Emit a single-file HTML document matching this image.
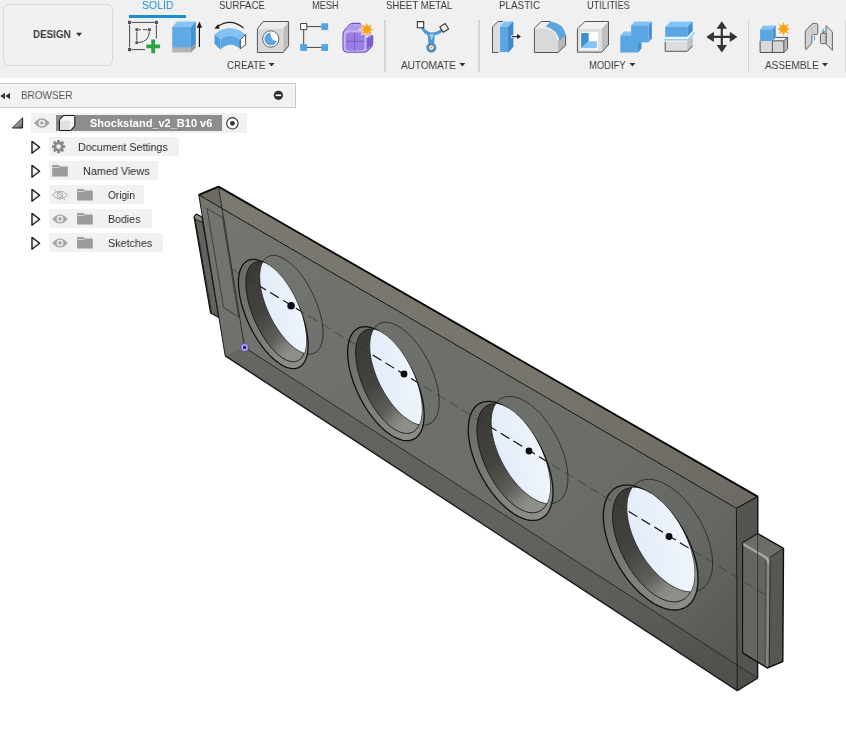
<!DOCTYPE html>
<html><head><meta charset="utf-8"><title>Shockstand_v2_B10 v6</title>
<style>
html,body{margin:0;padding:0;background:#fff;}
body{width:846px;height:738px;position:relative;overflow:hidden;font-family:"Liberation Sans",sans-serif;}
.t{position:absolute;white-space:nowrap;transform-origin:0 0;line-height:normal;will-change:transform;}
.abs{position:absolute;}
#toolbar{left:0;top:0;width:846px;height:78.3px;background:#f0f0f0;}
#design{left:3px;top:4px;width:108px;height:60px;border:1px solid #d9d9d9;border-radius:6px;background:#f1f1f1;box-sizing:content-box;}
#bhead{left:-1px;top:82.7px;width:294.6px;height:23.6px;background:#f2f2f2;border:1px solid #c9c9c9;}
.row{position:absolute;height:19.8px;background:#f1f1f1;}
#sel{left:56px;top:115.2px;width:166.3px;height:15.6px;background:#8d8d8d;}
.sep{position:absolute;width:1.6px;top:20px;height:52px;background:#d6d6d6;}
svg{position:absolute;left:0;top:0;}
</style></head><body>
<div class="abs" id="toolbar"></div>
<div class="abs" id="design"></div>
<div class="sep" style="left:384px"></div><div class="sep" style="left:478.2px"></div><div class="sep" style="left:747.6px"></div><div class="sep" style="left:844.6px"></div>
<div class="abs" style="left:129.4px;top:15px;width:56.4px;height:2.8px;background:#1a8fd3"></div>
<div class="abs" id="bhead"></div>
<div class="row" style="left:31px;top:112.8px;width:215.5px"></div>
<div class="row" style="left:49.4px;top:136.6px;width:129.6px"></div>
<div class="row" style="left:49.4px;top:160.6px;width:109.1px"></div>
<div class="row" style="left:49.4px;top:184.7px;width:94.2px"></div>
<div class="row" style="left:49.4px;top:208.6px;width:102.4px"></div>
<div class="row" style="left:49.4px;top:232.6px;width:113.6px"></div>
<div class="abs" id="sel"></div>
<svg width="846" height="738" viewBox="0 0 846 738">
<defs>
<linearGradient id="gFront" gradientUnits="userSpaceOnUse" x1="230" y1="220" x2="700" y2="680"><stop offset="0" stop-color="#73756f"/><stop offset="0.3" stop-color="#6e706c"/><stop offset="0.65" stop-color="#6b6d69"/><stop offset="0.85" stop-color="#656763"/><stop offset="1" stop-color="#575955"/></linearGradient>
<linearGradient id="gTop" gradientUnits="userSpaceOnUse" x1="210" y1="190" x2="750" y2="500"><stop offset="0" stop-color="#7c7970"/><stop offset="0.6" stop-color="#77746b"/><stop offset="1" stop-color="#6c6a62"/></linearGradient>
<linearGradient id="gWin" x1="0" y1="0.6" x2="1" y2="0.3"><stop offset="0" stop-color="#e1ebf8"/><stop offset="0.5" stop-color="#ecf2fb"/><stop offset="1" stop-color="#f7faff"/></linearGradient>
<linearGradient id="gBore" x1="0" y1="0" x2="0.6" y2="1"><stop offset="0" stop-color="#383835"/><stop offset="0.5" stop-color="#43433f"/><stop offset="0.78" stop-color="#5f5f5a"/><stop offset="0.92" stop-color="#84847f"/><stop offset="1" stop-color="#8f8f8a"/></linearGradient>
<linearGradient id="gCham" x1="0" y1="0" x2="0.7" y2="1"><stop offset="0" stop-color="#686964"/><stop offset="0.5" stop-color="#787974"/><stop offset="1" stop-color="#8b8c86"/></linearGradient>
</defs>
<polygon points="194.1,217 196.3,214.2 201.8,217 202.8,222.5 218.9,317.3 210.6,313" fill="#62635e" stroke="#141414" stroke-width="1.3" stroke-linejoin="round"/>
<polygon points="194.1,217 196.3,214.2 201.8,217 202.8,222.5 195.3,219.2" fill="#8a8983" stroke="#141414" stroke-width="0.9" stroke-linejoin="round"/>
<polyline points="195.3,219.2 211.6,313.4" fill="none" stroke="#1c1c1c" stroke-width="0.8"/>
<polygon points="198.8,194.9 218.5,186.6 757.8,496.6 736.4,508.3" fill="url(#gTop)"/>
<polygon points="736.4,508.3 757.8,496.6 757.6,678.1 737.3,690.6" fill="#55544f"/>
<polygon points="198.8,194.9 736.4,508.3 737.3,690.6 225.2,355.8" fill="url(#gFront)"/>
<polygon points="198.8,194.9 218.5,186.6 222.0,208.5" fill="#67665e" opacity="0.75"/>
<polygon points="198.8,194.9 222.0,208.5 244.6,347.5 225.2,355.8" fill="#6b6a62" opacity="0.10"/>
<polygon points="225.2,355.8 244.6,347.5 757.6,678.1 737.3,690.6" fill="#3c3c38" opacity="0.22"/>
<polyline points="218.5,186.6 244.6,347.5 757.6,678.1" fill="none" stroke="#222" stroke-width="1" opacity="0.85"/>
<polygon points="207,208.5 222.6,217.6 238.6,317 223.6,307.3" fill="none" stroke="#2a2a28" stroke-width="0.8" opacity="0.85"/>
<clipPath id="cl0"><path d="M305.59 331.64 L305.92 334.63 L306.13 337.53 L306.19 340.31 L306.13 342.96 L305.94 345.47 L305.61 347.83 L305.16 350.03 L304.58 352.06 L303.88 353.91 L303.06 355.58 L302.12 357.06 L301.07 358.34 L299.92 359.42 L298.67 360.30 L297.32 360.97 L295.88 361.42 L294.37 361.67 L292.77 361.71 L291.11 361.53 L289.38 361.15 L287.61 360.55 L285.78 359.76 L283.92 358.76 L282.02 357.57 L280.11 356.19 L278.18 354.63 L276.24 352.89 L274.30 350.98 L272.37 348.91 L270.45 346.69 L268.56 344.32 L266.70 341.83 L264.88 339.20 L263.11 336.47 L261.39 333.64 L259.73 330.71 L258.14 327.71 L256.62 324.64 L255.18 321.52 L253.83 318.35 L252.56 315.16 L251.40 311.96 L250.33 308.75 L249.37 305.55 L248.52 302.37 L247.78 299.23 L247.16 296.14 L246.66 293.12 L246.28 290.16 L246.03 287.30 L245.89 284.53 L245.89 281.87 L246.01 279.34 L246.26 276.94 L246.63 274.68 L247.13 272.57 L247.75 270.63 L248.49 268.86 L249.35 267.27 L250.33 265.87 L251.41 264.67 L252.61 263.66 L253.90 262.86 L255.30 262.27 L256.78 261.89 L258.35 261.72 L260.00 261.78 L261.72 262.05 L263.51 262.54 L265.35 263.25 L267.24 264.16 L269.17 265.29 L271.14 266.63 L273.13 268.16 L275.13 269.89 L277.14 271.81 L279.14 273.90 L281.13 276.16 L283.10 278.59 L285.04 281.16 L286.94 283.87 L288.79 286.70 L290.59 289.65 L292.32 292.69 L293.98 295.82 L295.56 299.02 L297.05 302.27 L298.44 305.57 L299.74 308.90 L300.93 312.23 L302.01 315.56 L302.97 318.87 L303.82 322.15 L304.54 325.38 L305.13 328.55 L305.59 331.64 Z"/></clipPath>
<path d="M322.43 324.36 L322.77 327.33 L322.98 330.19 L323.04 332.94 L322.97 335.56 L322.76 338.04 L322.41 340.38 L321.92 342.56 L321.31 344.57 L320.57 346.41 L319.70 348.07 L318.71 349.53 L317.60 350.81 L316.39 351.88 L315.07 352.76 L313.65 353.42 L312.13 353.88 L310.53 354.14 L308.85 354.18 L307.10 354.01 L305.29 353.64 L303.42 353.07 L301.50 352.29 L299.54 351.31 L297.55 350.15 L295.54 348.79 L293.51 347.25 L291.47 345.54 L289.43 343.66 L287.40 341.63 L285.39 339.44 L283.41 337.11 L281.46 334.64 L279.55 332.06 L277.69 329.36 L275.89 326.56 L274.15 323.68 L272.48 320.71 L270.89 317.68 L269.38 314.60 L267.96 311.48 L266.64 308.32 L265.42 305.16 L264.30 301.98 L263.30 298.82 L262.41 295.68 L261.65 292.58 L261.00 289.52 L260.48 286.53 L260.09 283.61 L259.83 280.77 L259.70 278.03 L259.70 275.40 L259.83 272.89 L260.10 270.51 L260.50 268.28 L261.03 266.19 L261.69 264.27 L262.48 262.51 L263.39 260.94 L264.42 259.54 L265.57 258.34 L266.83 257.34 L268.20 256.54 L269.67 255.95 L271.23 255.57 L272.89 255.40 L274.62 255.45 L276.43 255.71 L278.31 256.19 L280.25 256.88 L282.24 257.78 L284.27 258.89 L286.34 260.20 L288.43 261.71 L290.53 263.41 L292.64 265.30 L294.75 267.36 L296.84 269.59 L298.91 271.98 L300.94 274.52 L302.93 277.19 L304.88 279.98 L306.76 282.89 L308.57 285.89 L310.31 288.98 L311.96 292.14 L313.52 295.36 L314.98 298.61 L316.34 301.89 L317.58 305.19 L318.71 308.48 L319.71 311.75 L320.59 314.99 L321.34 318.18 L321.95 321.31 L322.43 324.36 Z" fill="none" stroke="#222" stroke-width="1" opacity="0.8"/>
<path d="M307.40 335.86 L307.78 339.14 L308.01 342.30 L308.09 345.34 L308.02 348.23 L307.79 350.97 L307.41 353.55 L306.89 355.95 L306.22 358.16 L305.40 360.18 L304.45 362.00 L303.37 363.61 L302.16 365.00 L300.83 366.17 L299.38 367.12 L297.82 367.84 L296.16 368.33 L294.41 368.59 L292.56 368.62 L290.64 368.42 L288.65 367.99 L286.60 367.34 L284.50 366.46 L282.35 365.37 L280.16 364.07 L277.95 362.55 L275.72 360.84 L273.49 358.94 L271.25 356.85 L269.02 354.59 L266.82 352.16 L264.64 349.58 L262.49 346.85 L260.40 343.99 L258.35 341.01 L256.37 337.91 L254.46 334.72 L252.62 331.45 L250.87 328.10 L249.21 324.70 L247.64 321.25 L246.19 317.76 L244.84 314.27 L243.61 310.77 L242.50 307.28 L241.51 303.81 L240.66 300.39 L239.94 297.02 L239.36 293.71 L238.91 290.49 L238.61 287.36 L238.46 284.34 L238.45 281.44 L238.58 278.67 L238.86 276.04 L239.29 273.58 L239.85 271.28 L240.57 269.15 L241.42 267.22 L242.40 265.48 L243.52 263.94 L244.77 262.62 L246.15 261.51 L247.64 260.63 L249.24 259.98 L250.96 259.56 L252.77 259.38 L254.67 259.44 L256.66 259.73 L258.72 260.26 L260.84 261.03 L263.03 262.03 L265.26 263.26 L267.53 264.72 L269.83 266.40 L272.14 268.29 L274.47 270.38 L276.79 272.67 L279.09 275.15 L281.37 277.80 L283.61 280.61 L285.81 283.58 L287.96 286.68 L290.04 289.90 L292.04 293.24 L293.96 296.66 L295.79 300.17 L297.51 303.73 L299.13 307.34 L300.63 310.98 L302.01 314.63 L303.26 318.28 L304.37 321.90 L305.35 325.49 L306.18 329.02 L306.86 332.48 L307.40 335.86 Z" fill="url(#gCham)" stroke="#101010" stroke-width="1.3"/>
<path d="M305.59 331.64 L305.92 334.63 L306.13 337.53 L306.19 340.31 L306.13 342.96 L305.94 345.47 L305.61 347.83 L305.16 350.03 L304.58 352.06 L303.88 353.91 L303.06 355.58 L302.12 357.06 L301.07 358.34 L299.92 359.42 L298.67 360.30 L297.32 360.97 L295.88 361.42 L294.37 361.67 L292.77 361.71 L291.11 361.53 L289.38 361.15 L287.61 360.55 L285.78 359.76 L283.92 358.76 L282.02 357.57 L280.11 356.19 L278.18 354.63 L276.24 352.89 L274.30 350.98 L272.37 348.91 L270.45 346.69 L268.56 344.32 L266.70 341.83 L264.88 339.20 L263.11 336.47 L261.39 333.64 L259.73 330.71 L258.14 327.71 L256.62 324.64 L255.18 321.52 L253.83 318.35 L252.56 315.16 L251.40 311.96 L250.33 308.75 L249.37 305.55 L248.52 302.37 L247.78 299.23 L247.16 296.14 L246.66 293.12 L246.28 290.16 L246.03 287.30 L245.89 284.53 L245.89 281.87 L246.01 279.34 L246.26 276.94 L246.63 274.68 L247.13 272.57 L247.75 270.63 L248.49 268.86 L249.35 267.27 L250.33 265.87 L251.41 264.67 L252.61 263.66 L253.90 262.86 L255.30 262.27 L256.78 261.89 L258.35 261.72 L260.00 261.78 L261.72 262.05 L263.51 262.54 L265.35 263.25 L267.24 264.16 L269.17 265.29 L271.14 266.63 L273.13 268.16 L275.13 269.89 L277.14 271.81 L279.14 273.90 L281.13 276.16 L283.10 278.59 L285.04 281.16 L286.94 283.87 L288.79 286.70 L290.59 289.65 L292.32 292.69 L293.98 295.82 L295.56 299.02 L297.05 302.27 L298.44 305.57 L299.74 308.90 L300.93 312.23 L302.01 315.56 L302.97 318.87 L303.82 322.15 L304.54 325.38 L305.13 328.55 L305.59 331.64 Z" fill="url(#gBore)" stroke="#151515" stroke-width="0.9"/>
<path d="M322.43 324.36 L322.77 327.33 L322.98 330.19 L323.04 332.94 L322.97 335.56 L322.76 338.04 L322.41 340.38 L321.92 342.56 L321.31 344.57 L320.57 346.41 L319.70 348.07 L318.71 349.53 L317.60 350.81 L316.39 351.88 L315.07 352.76 L313.65 353.42 L312.13 353.88 L310.53 354.14 L308.85 354.18 L307.10 354.01 L305.29 353.64 L303.42 353.07 L301.50 352.29 L299.54 351.31 L297.55 350.15 L295.54 348.79 L293.51 347.25 L291.47 345.54 L289.43 343.66 L287.40 341.63 L285.39 339.44 L283.41 337.11 L281.46 334.64 L279.55 332.06 L277.69 329.36 L275.89 326.56 L274.15 323.68 L272.48 320.71 L270.89 317.68 L269.38 314.60 L267.96 311.48 L266.64 308.32 L265.42 305.16 L264.30 301.98 L263.30 298.82 L262.41 295.68 L261.65 292.58 L261.00 289.52 L260.48 286.53 L260.09 283.61 L259.83 280.77 L259.70 278.03 L259.70 275.40 L259.83 272.89 L260.10 270.51 L260.50 268.28 L261.03 266.19 L261.69 264.27 L262.48 262.51 L263.39 260.94 L264.42 259.54 L265.57 258.34 L266.83 257.34 L268.20 256.54 L269.67 255.95 L271.23 255.57 L272.89 255.40 L274.62 255.45 L276.43 255.71 L278.31 256.19 L280.25 256.88 L282.24 257.78 L284.27 258.89 L286.34 260.20 L288.43 261.71 L290.53 263.41 L292.64 265.30 L294.75 267.36 L296.84 269.59 L298.91 271.98 L300.94 274.52 L302.93 277.19 L304.88 279.98 L306.76 282.89 L308.57 285.89 L310.31 288.98 L311.96 292.14 L313.52 295.36 L314.98 298.61 L316.34 301.89 L317.58 305.19 L318.71 308.48 L319.71 311.75 L320.59 314.99 L321.34 318.18 L321.95 321.31 L322.43 324.36 Z" fill="url(#gWin)" stroke="#222" stroke-width="0.8" clip-path="url(#cl0)"/>
<clipPath id="cl1"><path d="M421.52 403.36 L421.75 406.45 L421.85 409.42 L421.79 412.26 L421.59 414.97 L421.25 417.53 L420.77 419.92 L420.15 422.14 L419.39 424.19 L418.50 426.04 L417.48 427.70 L416.35 429.16 L415.09 430.40 L413.72 431.44 L412.25 432.26 L410.68 432.86 L409.02 433.25 L407.28 433.41 L405.46 433.35 L403.57 433.07 L401.62 432.58 L399.62 431.87 L397.58 430.95 L395.51 429.83 L393.40 428.50 L391.28 426.98 L389.15 425.27 L387.03 423.38 L384.91 421.32 L382.80 419.09 L380.73 416.71 L378.68 414.19 L376.68 411.53 L374.73 408.75 L372.84 405.85 L371.02 402.86 L369.26 399.78 L367.59 396.62 L366.00 393.40 L364.51 390.12 L363.11 386.82 L361.82 383.48 L360.64 380.14 L359.58 376.80 L358.63 373.48 L357.81 370.18 L357.12 366.93 L356.55 363.74 L356.12 360.61 L355.83 357.57 L355.67 354.63 L355.64 351.79 L355.76 349.07 L356.01 346.48 L356.41 344.04 L356.94 341.75 L357.60 339.63 L358.40 337.67 L359.32 335.90 L360.38 334.32 L361.55 332.94 L362.84 331.76 L364.25 330.80 L365.77 330.05 L367.38 329.52 L369.09 329.21 L370.89 329.13 L372.76 329.28 L374.71 329.65 L376.73 330.25 L378.80 331.07 L380.91 332.12 L383.06 333.38 L385.24 334.85 L387.44 336.54 L389.64 338.42 L391.84 340.49 L394.03 342.75 L396.20 345.18 L398.34 347.77 L400.43 350.51 L402.47 353.39 L404.45 356.40 L406.37 359.52 L408.20 362.73 L409.95 366.03 L411.60 369.40 L413.15 372.81 L414.59 376.27 L415.91 379.75 L417.11 383.23 L418.19 386.70 L419.13 390.15 L419.94 393.55 L420.61 396.90 L421.13 400.17 L421.52 403.36 Z"/></clipPath>
<path d="M438.88 395.48 L439.12 398.53 L439.20 401.46 L439.14 404.28 L438.92 406.95 L438.55 409.48 L438.04 411.85 L437.38 414.05 L436.57 416.07 L435.63 417.91 L434.56 419.56 L433.36 421.00 L432.03 422.24 L430.59 423.27 L429.04 424.09 L427.39 424.70 L425.64 425.09 L423.81 425.26 L421.89 425.21 L419.91 424.94 L417.86 424.47 L415.76 423.78 L413.62 422.88 L411.43 421.78 L409.23 420.48 L407.00 418.99 L404.77 417.31 L402.53 415.45 L400.31 413.42 L398.11 411.23 L395.93 408.89 L393.79 406.41 L391.69 403.79 L389.65 401.05 L387.67 398.20 L385.75 395.25 L383.92 392.21 L382.17 389.09 L380.51 385.91 L378.95 382.69 L377.49 379.42 L376.14 376.13 L374.91 372.83 L373.80 369.53 L372.82 366.25 L371.96 363.00 L371.24 359.79 L370.66 356.63 L370.21 353.54 L369.91 350.54 L369.75 347.62 L369.74 344.82 L369.87 342.13 L370.14 339.57 L370.57 337.15 L371.13 334.88 L371.84 332.78 L372.68 330.84 L373.66 329.09 L374.78 327.52 L376.02 326.15 L377.38 324.98 L378.87 324.02 L380.46 323.27 L382.16 322.74 L383.97 322.43 L385.86 322.34 L387.83 322.47 L389.88 322.83 L392.00 323.42 L394.18 324.22 L396.40 325.25 L398.66 326.48 L400.94 327.93 L403.25 329.59 L405.56 331.44 L407.87 333.48 L410.17 335.70 L412.44 338.09 L414.68 340.64 L416.87 343.34 L419.01 346.18 L421.09 349.14 L423.09 352.22 L425.01 355.39 L426.83 358.64 L428.56 361.96 L430.18 365.33 L431.68 368.74 L433.06 372.17 L434.31 375.60 L435.43 379.03 L436.41 382.43 L437.25 385.79 L437.94 389.09 L438.48 392.33 L438.88 395.48 Z" fill="none" stroke="#222" stroke-width="1" opacity="0.8"/>
<path d="M423.75 407.94 L424.02 411.31 L424.13 414.56 L424.07 417.67 L423.84 420.63 L423.44 423.42 L422.88 426.03 L422.16 428.45 L421.28 430.68 L420.25 432.70 L419.07 434.50 L417.76 436.09 L416.30 437.44 L414.72 438.57 L413.02 439.45 L411.21 440.10 L409.29 440.51 L407.27 440.68 L405.17 440.61 L402.99 440.29 L400.74 439.74 L398.43 438.96 L396.08 437.95 L393.68 436.71 L391.25 435.26 L388.81 433.59 L386.35 431.72 L383.90 429.65 L381.45 427.40 L379.03 424.96 L376.63 422.36 L374.28 419.61 L371.97 416.70 L369.72 413.67 L367.54 410.51 L365.44 407.24 L363.41 403.88 L361.48 400.43 L359.65 396.92 L357.93 393.35 L356.32 389.74 L354.83 386.10 L353.46 382.46 L352.23 378.81 L351.14 375.19 L350.19 371.59 L349.38 368.05 L348.73 364.56 L348.22 361.15 L347.87 357.83 L347.68 354.61 L347.65 351.51 L347.78 348.55 L348.07 345.72 L348.51 343.05 L349.12 340.55 L349.88 338.22 L350.79 336.08 L351.85 334.15 L353.06 332.42 L354.41 330.90 L355.90 329.61 L357.52 328.55 L359.26 327.73 L361.13 327.14 L363.10 326.80 L365.17 326.71 L367.34 326.86 L369.59 327.27 L371.91 327.92 L374.30 328.81 L376.75 329.95 L379.23 331.33 L381.75 332.94 L384.29 334.78 L386.84 336.84 L389.39 339.11 L391.92 341.58 L394.43 344.24 L396.91 347.07 L399.33 350.08 L401.70 353.23 L403.99 356.52 L406.21 359.94 L408.33 363.46 L410.35 367.07 L412.27 370.76 L414.06 374.50 L415.73 378.29 L417.26 382.10 L418.65 385.91 L419.90 389.71 L420.99 393.48 L421.93 397.21 L422.70 400.87 L423.31 404.45 L423.75 407.94 Z" fill="url(#gCham)" stroke="#101010" stroke-width="1.3"/>
<path d="M421.52 403.36 L421.75 406.45 L421.85 409.42 L421.79 412.26 L421.59 414.97 L421.25 417.53 L420.77 419.92 L420.15 422.14 L419.39 424.19 L418.50 426.04 L417.48 427.70 L416.35 429.16 L415.09 430.40 L413.72 431.44 L412.25 432.26 L410.68 432.86 L409.02 433.25 L407.28 433.41 L405.46 433.35 L403.57 433.07 L401.62 432.58 L399.62 431.87 L397.58 430.95 L395.51 429.83 L393.40 428.50 L391.28 426.98 L389.15 425.27 L387.03 423.38 L384.91 421.32 L382.80 419.09 L380.73 416.71 L378.68 414.19 L376.68 411.53 L374.73 408.75 L372.84 405.85 L371.02 402.86 L369.26 399.78 L367.59 396.62 L366.00 393.40 L364.51 390.12 L363.11 386.82 L361.82 383.48 L360.64 380.14 L359.58 376.80 L358.63 373.48 L357.81 370.18 L357.12 366.93 L356.55 363.74 L356.12 360.61 L355.83 357.57 L355.67 354.63 L355.64 351.79 L355.76 349.07 L356.01 346.48 L356.41 344.04 L356.94 341.75 L357.60 339.63 L358.40 337.67 L359.32 335.90 L360.38 334.32 L361.55 332.94 L362.84 331.76 L364.25 330.80 L365.77 330.05 L367.38 329.52 L369.09 329.21 L370.89 329.13 L372.76 329.28 L374.71 329.65 L376.73 330.25 L378.80 331.07 L380.91 332.12 L383.06 333.38 L385.24 334.85 L387.44 336.54 L389.64 338.42 L391.84 340.49 L394.03 342.75 L396.20 345.18 L398.34 347.77 L400.43 350.51 L402.47 353.39 L404.45 356.40 L406.37 359.52 L408.20 362.73 L409.95 366.03 L411.60 369.40 L413.15 372.81 L414.59 376.27 L415.91 379.75 L417.11 383.23 L418.19 386.70 L419.13 390.15 L419.94 393.55 L420.61 396.90 L421.13 400.17 L421.52 403.36 Z" fill="url(#gBore)" stroke="#151515" stroke-width="0.9"/>
<path d="M438.88 395.48 L439.12 398.53 L439.20 401.46 L439.14 404.28 L438.92 406.95 L438.55 409.48 L438.04 411.85 L437.38 414.05 L436.57 416.07 L435.63 417.91 L434.56 419.56 L433.36 421.00 L432.03 422.24 L430.59 423.27 L429.04 424.09 L427.39 424.70 L425.64 425.09 L423.81 425.26 L421.89 425.21 L419.91 424.94 L417.86 424.47 L415.76 423.78 L413.62 422.88 L411.43 421.78 L409.23 420.48 L407.00 418.99 L404.77 417.31 L402.53 415.45 L400.31 413.42 L398.11 411.23 L395.93 408.89 L393.79 406.41 L391.69 403.79 L389.65 401.05 L387.67 398.20 L385.75 395.25 L383.92 392.21 L382.17 389.09 L380.51 385.91 L378.95 382.69 L377.49 379.42 L376.14 376.13 L374.91 372.83 L373.80 369.53 L372.82 366.25 L371.96 363.00 L371.24 359.79 L370.66 356.63 L370.21 353.54 L369.91 350.54 L369.75 347.62 L369.74 344.82 L369.87 342.13 L370.14 339.57 L370.57 337.15 L371.13 334.88 L371.84 332.78 L372.68 330.84 L373.66 329.09 L374.78 327.52 L376.02 326.15 L377.38 324.98 L378.87 324.02 L380.46 323.27 L382.16 322.74 L383.97 322.43 L385.86 322.34 L387.83 322.47 L389.88 322.83 L392.00 323.42 L394.18 324.22 L396.40 325.25 L398.66 326.48 L400.94 327.93 L403.25 329.59 L405.56 331.44 L407.87 333.48 L410.17 335.70 L412.44 338.09 L414.68 340.64 L416.87 343.34 L419.01 346.18 L421.09 349.14 L423.09 352.22 L425.01 355.39 L426.83 358.64 L428.56 361.96 L430.18 365.33 L431.68 368.74 L433.06 372.17 L434.31 375.60 L435.43 379.03 L436.41 382.43 L437.25 385.79 L437.94 389.09 L438.48 392.33 L438.88 395.48 Z" fill="url(#gWin)" stroke="#222" stroke-width="0.8" clip-path="url(#cl1)"/>
<clipPath id="cl2"><path d="M550.05 482.89 L550.16 486.07 L550.12 489.12 L549.92 492.03 L549.55 494.79 L549.03 497.38 L548.36 499.80 L547.53 502.04 L546.56 504.08 L545.44 505.93 L544.19 507.56 L542.81 508.98 L541.31 510.18 L539.69 511.15 L537.96 511.90 L536.12 512.42 L534.20 512.71 L532.19 512.77 L530.10 512.59 L527.95 512.19 L525.74 511.57 L523.48 510.72 L521.18 509.65 L518.86 508.37 L516.51 506.89 L514.15 505.20 L511.80 503.33 L509.45 501.26 L507.12 499.03 L504.82 496.62 L502.56 494.06 L500.34 491.36 L498.18 488.52 L496.08 485.56 L494.06 482.48 L492.11 479.31 L490.25 476.05 L488.49 472.72 L486.83 469.33 L485.28 465.90 L483.84 462.43 L482.53 458.95 L481.34 455.46 L480.28 451.98 L479.36 448.52 L478.58 445.10 L477.94 441.73 L477.45 438.43 L477.10 435.21 L476.91 432.08 L476.87 429.05 L476.98 426.15 L477.25 423.37 L477.67 420.74 L478.23 418.26 L478.95 415.94 L479.81 413.80 L480.82 411.85 L481.97 410.09 L483.25 408.53 L484.67 407.18 L486.21 406.05 L487.87 405.14 L489.64 404.46 L491.52 404.01 L493.49 403.79 L495.56 403.81 L497.71 404.07 L499.93 404.56 L502.21 405.29 L504.54 406.26 L506.92 407.45 L509.33 408.87 L511.76 410.51 L514.20 412.36 L516.64 414.42 L519.06 416.68 L521.47 419.12 L523.84 421.74 L526.16 424.52 L528.44 427.46 L530.64 430.53 L532.77 433.73 L534.81 437.04 L536.76 440.45 L538.61 443.93 L540.34 447.48 L541.95 451.08 L543.43 454.71 L544.78 458.36 L545.99 462.00 L547.05 465.62 L547.96 469.21 L548.72 472.74 L549.32 476.21 L549.76 479.60 L550.05 482.89 Z"/></clipPath>
<path d="M567.82 474.22 L567.93 477.36 L567.88 480.37 L567.65 483.25 L567.26 485.97 L566.70 488.54 L565.98 490.93 L565.11 493.15 L564.08 495.17 L562.90 496.99 L561.58 498.61 L560.12 500.02 L558.54 501.22 L556.83 502.19 L555.01 502.94 L553.08 503.46 L551.06 503.76 L548.95 503.83 L546.76 503.67 L544.50 503.29 L542.18 502.68 L539.81 501.85 L537.40 500.82 L534.95 499.57 L532.49 498.11 L530.02 496.46 L527.56 494.62 L525.10 492.60 L522.66 490.40 L520.25 488.04 L517.88 485.52 L515.56 482.86 L513.30 480.07 L511.10 477.15 L508.98 474.13 L506.95 471.01 L505.01 467.80 L503.17 464.52 L501.43 461.18 L499.81 457.79 L498.32 454.38 L496.95 450.94 L495.71 447.50 L494.61 444.06 L493.65 440.65 L492.85 437.28 L492.19 433.96 L491.68 430.70 L491.33 427.51 L491.14 424.42 L491.11 421.43 L491.24 418.56 L491.53 415.81 L491.98 413.21 L492.59 410.76 L493.35 408.47 L494.26 406.35 L495.33 404.41 L496.54 402.67 L497.90 401.12 L499.39 399.78 L501.02 398.66 L502.77 397.75 L504.63 397.07 L506.61 396.62 L508.69 396.39 L510.86 396.40 L513.12 396.65 L515.45 397.13 L517.85 397.84 L520.30 398.78 L522.79 399.95 L525.32 401.34 L527.86 402.94 L530.42 404.76 L532.98 406.78 L535.52 409.00 L538.04 411.40 L540.52 413.97 L542.95 416.71 L545.33 419.60 L547.63 422.63 L549.86 425.78 L551.99 429.03 L554.03 432.39 L555.95 435.82 L557.76 439.32 L559.43 442.86 L560.98 446.44 L562.38 450.03 L563.64 453.62 L564.74 457.19 L565.68 460.73 L566.47 464.22 L567.09 467.64 L567.54 470.98 L567.82 474.22 Z" fill="none" stroke="#222" stroke-width="1" opacity="0.8"/>
<path d="M552.83 487.90 L552.96 491.37 L552.91 494.70 L552.68 497.88 L552.25 500.90 L551.65 503.73 L550.87 506.37 L549.91 508.81 L548.78 511.04 L547.49 513.04 L546.04 514.82 L544.44 516.36 L542.70 517.66 L540.83 518.72 L538.83 519.53 L536.71 520.08 L534.48 520.39 L532.16 520.44 L529.75 520.24 L527.26 519.79 L524.71 519.10 L522.10 518.16 L519.45 516.99 L516.77 515.59 L514.06 513.96 L511.34 512.11 L508.62 510.05 L505.91 507.80 L503.23 505.35 L500.57 502.72 L497.96 499.92 L495.41 496.97 L492.91 493.87 L490.49 490.63 L488.16 487.28 L485.91 483.81 L483.77 480.26 L481.73 476.63 L479.81 472.93 L478.02 469.18 L476.36 465.40 L474.84 461.59 L473.47 457.79 L472.24 453.99 L471.18 450.22 L470.27 446.49 L469.53 442.81 L468.96 439.21 L468.55 435.69 L468.32 432.27 L468.27 428.97 L468.39 425.79 L468.69 422.76 L469.16 419.88 L469.81 417.17 L470.63 414.64 L471.62 412.30 L472.78 410.16 L474.09 408.23 L475.57 406.52 L477.19 405.04 L478.97 403.80 L480.88 402.80 L482.92 402.05 L485.09 401.55 L487.37 401.31 L489.75 401.33 L492.23 401.61 L494.79 402.14 L497.43 402.94 L500.13 403.99 L502.87 405.29 L505.66 406.84 L508.47 408.63 L511.29 410.66 L514.12 412.91 L516.93 415.38 L519.71 418.05 L522.46 420.92 L525.15 423.97 L527.79 427.18 L530.34 430.55 L532.81 434.06 L535.18 437.69 L537.43 441.42 L539.57 445.24 L541.58 449.13 L543.45 453.07 L545.17 457.05 L546.73 461.04 L548.13 465.03 L549.36 469.00 L550.42 472.92 L551.30 476.80 L551.99 480.59 L552.50 484.30 L552.83 487.90 Z" fill="url(#gCham)" stroke="#101010" stroke-width="1.3"/>
<path d="M550.05 482.89 L550.16 486.07 L550.12 489.12 L549.92 492.03 L549.55 494.79 L549.03 497.38 L548.36 499.80 L547.53 502.04 L546.56 504.08 L545.44 505.93 L544.19 507.56 L542.81 508.98 L541.31 510.18 L539.69 511.15 L537.96 511.90 L536.12 512.42 L534.20 512.71 L532.19 512.77 L530.10 512.59 L527.95 512.19 L525.74 511.57 L523.48 510.72 L521.18 509.65 L518.86 508.37 L516.51 506.89 L514.15 505.20 L511.80 503.33 L509.45 501.26 L507.12 499.03 L504.82 496.62 L502.56 494.06 L500.34 491.36 L498.18 488.52 L496.08 485.56 L494.06 482.48 L492.11 479.31 L490.25 476.05 L488.49 472.72 L486.83 469.33 L485.28 465.90 L483.84 462.43 L482.53 458.95 L481.34 455.46 L480.28 451.98 L479.36 448.52 L478.58 445.10 L477.94 441.73 L477.45 438.43 L477.10 435.21 L476.91 432.08 L476.87 429.05 L476.98 426.15 L477.25 423.37 L477.67 420.74 L478.23 418.26 L478.95 415.94 L479.81 413.80 L480.82 411.85 L481.97 410.09 L483.25 408.53 L484.67 407.18 L486.21 406.05 L487.87 405.14 L489.64 404.46 L491.52 404.01 L493.49 403.79 L495.56 403.81 L497.71 404.07 L499.93 404.56 L502.21 405.29 L504.54 406.26 L506.92 407.45 L509.33 408.87 L511.76 410.51 L514.20 412.36 L516.64 414.42 L519.06 416.68 L521.47 419.12 L523.84 421.74 L526.16 424.52 L528.44 427.46 L530.64 430.53 L532.77 433.73 L534.81 437.04 L536.76 440.45 L538.61 443.93 L540.34 447.48 L541.95 451.08 L543.43 454.71 L544.78 458.36 L545.99 462.00 L547.05 465.62 L547.96 469.21 L548.72 472.74 L549.32 476.21 L549.76 479.60 L550.05 482.89 Z" fill="url(#gBore)" stroke="#151515" stroke-width="0.9"/>
<path d="M567.82 474.22 L567.93 477.36 L567.88 480.37 L567.65 483.25 L567.26 485.97 L566.70 488.54 L565.98 490.93 L565.11 493.15 L564.08 495.17 L562.90 496.99 L561.58 498.61 L560.12 500.02 L558.54 501.22 L556.83 502.19 L555.01 502.94 L553.08 503.46 L551.06 503.76 L548.95 503.83 L546.76 503.67 L544.50 503.29 L542.18 502.68 L539.81 501.85 L537.40 500.82 L534.95 499.57 L532.49 498.11 L530.02 496.46 L527.56 494.62 L525.10 492.60 L522.66 490.40 L520.25 488.04 L517.88 485.52 L515.56 482.86 L513.30 480.07 L511.10 477.15 L508.98 474.13 L506.95 471.01 L505.01 467.80 L503.17 464.52 L501.43 461.18 L499.81 457.79 L498.32 454.38 L496.95 450.94 L495.71 447.50 L494.61 444.06 L493.65 440.65 L492.85 437.28 L492.19 433.96 L491.68 430.70 L491.33 427.51 L491.14 424.42 L491.11 421.43 L491.24 418.56 L491.53 415.81 L491.98 413.21 L492.59 410.76 L493.35 408.47 L494.26 406.35 L495.33 404.41 L496.54 402.67 L497.90 401.12 L499.39 399.78 L501.02 398.66 L502.77 397.75 L504.63 397.07 L506.61 396.62 L508.69 396.39 L510.86 396.40 L513.12 396.65 L515.45 397.13 L517.85 397.84 L520.30 398.78 L522.79 399.95 L525.32 401.34 L527.86 402.94 L530.42 404.76 L532.98 406.78 L535.52 409.00 L538.04 411.40 L540.52 413.97 L542.95 416.71 L545.33 419.60 L547.63 422.63 L549.86 425.78 L551.99 429.03 L554.03 432.39 L555.95 435.82 L557.76 439.32 L559.43 442.86 L560.98 446.44 L562.38 450.03 L563.64 453.62 L564.74 457.19 L565.68 460.73 L566.47 464.22 L567.09 467.64 L567.54 470.98 L567.82 474.22 Z" fill="url(#gWin)" stroke="#222" stroke-width="0.8" clip-path="url(#cl2)"/>
<clipPath id="cl3"><path d="M694.55 572.31 L694.52 575.58 L694.31 578.71 L693.92 581.68 L693.35 584.48 L692.61 587.11 L691.69 589.55 L690.62 591.78 L689.38 593.81 L687.99 595.63 L686.45 597.22 L684.78 598.58 L682.97 599.71 L681.04 600.60 L679.00 601.26 L676.85 601.67 L674.60 601.83 L672.27 601.76 L669.87 601.45 L667.40 600.89 L664.87 600.11 L662.31 599.09 L659.70 597.85 L657.08 596.39 L654.45 594.71 L651.81 592.83 L649.19 590.76 L646.58 588.49 L644.01 586.05 L641.47 583.44 L638.99 580.67 L636.57 577.76 L634.23 574.72 L631.96 571.55 L629.78 568.27 L627.69 564.90 L625.72 561.45 L623.86 557.92 L622.11 554.35 L620.50 550.73 L619.02 547.09 L617.68 543.44 L616.49 539.79 L615.45 536.16 L614.57 532.56 L613.84 529.01 L613.28 525.52 L612.88 522.10 L612.65 518.78 L612.59 515.56 L612.70 512.45 L612.98 509.48 L613.43 506.65 L614.04 503.97 L614.83 501.47 L615.78 499.13 L616.88 496.99 L618.15 495.05 L619.57 493.31 L621.13 491.79 L622.83 490.50 L624.67 489.43 L626.64 488.60 L628.72 488.01 L630.92 487.66 L633.22 487.56 L635.61 487.71 L638.08 488.10 L640.62 488.75 L643.22 489.64 L645.87 490.77 L648.56 492.14 L651.28 493.75 L654.01 495.58 L656.74 497.64 L659.45 499.91 L662.15 502.37 L664.80 505.03 L667.41 507.87 L669.96 510.87 L672.44 514.03 L674.84 517.33 L677.13 520.75 L679.33 524.28 L681.41 527.90 L683.36 531.60 L685.18 535.35 L686.86 539.15 L688.39 542.97 L689.76 546.80 L690.96 550.62 L692.00 554.40 L692.87 558.14 L693.56 561.82 L694.07 565.42 L694.40 568.92 L694.55 572.31 Z"/></clipPath>
<path d="M712.59 562.64 L712.54 565.86 L712.31 568.94 L711.88 571.88 L711.27 574.65 L710.48 577.24 L709.51 579.65 L708.37 581.86 L707.07 583.87 L705.60 585.67 L703.98 587.25 L702.22 588.60 L700.32 589.73 L698.29 590.62 L696.14 591.27 L693.88 591.69 L691.53 591.87 L689.08 591.81 L686.56 591.52 L683.97 590.99 L681.32 590.23 L678.63 589.24 L675.91 588.03 L673.16 586.60 L670.40 584.97 L667.64 583.13 L664.90 581.09 L662.17 578.88 L659.48 576.48 L656.83 573.92 L654.24 571.21 L651.71 568.35 L649.26 565.35 L646.89 562.24 L644.61 559.02 L642.44 555.71 L640.38 552.31 L638.44 548.84 L636.62 545.32 L634.95 541.76 L633.41 538.18 L632.02 534.58 L630.78 530.99 L629.70 527.41 L628.79 523.86 L628.04 520.36 L627.47 516.92 L627.07 513.55 L626.84 510.27 L626.79 507.09 L626.92 504.03 L627.22 501.09 L627.71 498.29 L628.37 495.65 L629.20 493.17 L630.21 490.87 L631.38 488.75 L632.72 486.82 L634.21 485.10 L635.86 483.59 L637.66 482.30 L639.60 481.24 L641.67 480.41 L643.86 479.82 L646.17 479.46 L648.58 479.35 L651.09 479.49 L653.68 479.87 L656.35 480.49 L659.08 481.36 L661.86 482.46 L664.68 483.80 L667.52 485.37 L670.38 487.17 L673.23 489.18 L676.08 491.41 L678.89 493.83 L681.67 496.44 L684.40 499.22 L687.06 502.17 L689.65 505.28 L692.15 508.52 L694.54 511.88 L696.83 515.35 L699.00 518.91 L701.03 522.55 L702.92 526.24 L704.66 529.98 L706.25 533.74 L707.67 537.50 L708.92 541.26 L709.99 544.99 L710.89 548.67 L711.60 552.30 L712.12 555.84 L712.45 559.30 L712.59 562.64 Z" fill="none" stroke="#222" stroke-width="1" opacity="0.8"/>
<path d="M698.04 577.85 L698.01 581.42 L697.76 584.84 L697.30 588.09 L696.64 591.15 L695.78 594.02 L694.72 596.68 L693.48 599.12 L692.04 601.33 L690.43 603.30 L688.65 605.03 L686.71 606.51 L684.62 607.74 L682.39 608.70 L680.03 609.40 L677.54 609.84 L674.95 610.01 L672.25 609.92 L669.47 609.56 L666.62 608.95 L663.70 608.08 L660.74 606.95 L657.74 605.59 L654.71 603.98 L651.67 602.14 L648.62 600.08 L645.59 597.81 L642.59 595.33 L639.62 592.66 L636.70 589.80 L633.84 586.78 L631.04 583.60 L628.33 580.27 L625.72 576.81 L623.20 573.23 L620.80 569.55 L618.52 565.78 L616.37 561.94 L614.35 558.03 L612.49 554.09 L610.78 550.11 L609.23 546.13 L607.85 542.15 L606.65 538.18 L605.62 534.26 L604.78 530.38 L604.12 526.57 L603.65 522.84 L603.38 519.21 L603.30 515.69 L603.42 512.30 L603.73 509.05 L604.24 505.96 L604.94 503.04 L605.84 500.29 L606.92 497.74 L608.20 495.40 L609.65 493.27 L611.28 491.37 L613.07 489.70 L615.04 488.28 L617.15 487.10 L619.42 486.19 L621.82 485.54 L624.35 485.15 L627.00 485.04 L629.76 485.19 L632.62 485.62 L635.56 486.32 L638.56 487.29 L641.63 488.53 L644.74 490.03 L647.88 491.78 L651.04 493.79 L654.20 496.04 L657.35 498.52 L660.47 501.22 L663.55 504.13 L666.57 507.24 L669.53 510.53 L672.40 513.99 L675.18 517.61 L677.85 521.36 L680.39 525.23 L682.80 529.20 L685.07 533.25 L687.18 537.37 L689.12 541.53 L690.89 545.72 L692.48 549.91 L693.88 554.09 L695.09 558.24 L696.10 562.34 L696.90 566.37 L697.49 570.31 L697.87 574.14 L698.04 577.85 Z" fill="url(#gCham)" stroke="#101010" stroke-width="1.3"/>
<path d="M694.55 572.31 L694.52 575.58 L694.31 578.71 L693.92 581.68 L693.35 584.48 L692.61 587.11 L691.69 589.55 L690.62 591.78 L689.38 593.81 L687.99 595.63 L686.45 597.22 L684.78 598.58 L682.97 599.71 L681.04 600.60 L679.00 601.26 L676.85 601.67 L674.60 601.83 L672.27 601.76 L669.87 601.45 L667.40 600.89 L664.87 600.11 L662.31 599.09 L659.70 597.85 L657.08 596.39 L654.45 594.71 L651.81 592.83 L649.19 590.76 L646.58 588.49 L644.01 586.05 L641.47 583.44 L638.99 580.67 L636.57 577.76 L634.23 574.72 L631.96 571.55 L629.78 568.27 L627.69 564.90 L625.72 561.45 L623.86 557.92 L622.11 554.35 L620.50 550.73 L619.02 547.09 L617.68 543.44 L616.49 539.79 L615.45 536.16 L614.57 532.56 L613.84 529.01 L613.28 525.52 L612.88 522.10 L612.65 518.78 L612.59 515.56 L612.70 512.45 L612.98 509.48 L613.43 506.65 L614.04 503.97 L614.83 501.47 L615.78 499.13 L616.88 496.99 L618.15 495.05 L619.57 493.31 L621.13 491.79 L622.83 490.50 L624.67 489.43 L626.64 488.60 L628.72 488.01 L630.92 487.66 L633.22 487.56 L635.61 487.71 L638.08 488.10 L640.62 488.75 L643.22 489.64 L645.87 490.77 L648.56 492.14 L651.28 493.75 L654.01 495.58 L656.74 497.64 L659.45 499.91 L662.15 502.37 L664.80 505.03 L667.41 507.87 L669.96 510.87 L672.44 514.03 L674.84 517.33 L677.13 520.75 L679.33 524.28 L681.41 527.90 L683.36 531.60 L685.18 535.35 L686.86 539.15 L688.39 542.97 L689.76 546.80 L690.96 550.62 L692.00 554.40 L692.87 558.14 L693.56 561.82 L694.07 565.42 L694.40 568.92 L694.55 572.31 Z" fill="url(#gBore)" stroke="#151515" stroke-width="0.9"/>
<path d="M712.59 562.64 L712.54 565.86 L712.31 568.94 L711.88 571.88 L711.27 574.65 L710.48 577.24 L709.51 579.65 L708.37 581.86 L707.07 583.87 L705.60 585.67 L703.98 587.25 L702.22 588.60 L700.32 589.73 L698.29 590.62 L696.14 591.27 L693.88 591.69 L691.53 591.87 L689.08 591.81 L686.56 591.52 L683.97 590.99 L681.32 590.23 L678.63 589.24 L675.91 588.03 L673.16 586.60 L670.40 584.97 L667.64 583.13 L664.90 581.09 L662.17 578.88 L659.48 576.48 L656.83 573.92 L654.24 571.21 L651.71 568.35 L649.26 565.35 L646.89 562.24 L644.61 559.02 L642.44 555.71 L640.38 552.31 L638.44 548.84 L636.62 545.32 L634.95 541.76 L633.41 538.18 L632.02 534.58 L630.78 530.99 L629.70 527.41 L628.79 523.86 L628.04 520.36 L627.47 516.92 L627.07 513.55 L626.84 510.27 L626.79 507.09 L626.92 504.03 L627.22 501.09 L627.71 498.29 L628.37 495.65 L629.20 493.17 L630.21 490.87 L631.38 488.75 L632.72 486.82 L634.21 485.10 L635.86 483.59 L637.66 482.30 L639.60 481.24 L641.67 480.41 L643.86 479.82 L646.17 479.46 L648.58 479.35 L651.09 479.49 L653.68 479.87 L656.35 480.49 L659.08 481.36 L661.86 482.46 L664.68 483.80 L667.52 485.37 L670.38 487.17 L673.23 489.18 L676.08 491.41 L678.89 493.83 L681.67 496.44 L684.40 499.22 L687.06 502.17 L689.65 505.28 L692.15 508.52 L694.54 511.88 L696.83 515.35 L699.00 518.91 L701.03 522.55 L702.92 526.24 L704.66 529.98 L706.25 533.74 L707.67 537.50 L708.92 541.26 L709.99 544.99 L710.89 548.67 L711.60 552.30 L712.12 555.84 L712.45 559.30 L712.59 562.64 Z" fill="url(#gWin)" stroke="#222" stroke-width="0.8" clip-path="url(#cl3)"/>
<polyline points="198.8,194.9 736.4,508.3" fill="none" stroke="#111" stroke-width="1"/>
<polyline points="736.4,508.3 737.3,690.6" fill="none" stroke="#151515" stroke-width="1"/>
<polyline points="198.8,194.9 225.2,355.8" fill="none" stroke="#1a1a1a" stroke-width="1"/>
<polyline points="225.2,355.8 737.3,690.6 757.6,678.1" fill="none" stroke="#1c1c1c" stroke-width="1.4" stroke-linejoin="round"/>
<polyline points="757.8,496.6 757.6,678.1" fill="none" stroke="#111" stroke-width="1.4"/>
<polyline points="198.8,194.9 218.5,186.6 757.8,496.6" fill="none" stroke="#080808" stroke-width="1.8" stroke-linejoin="round"/>
<polyline points="198.8,194.9 218.5,186.6" fill="none" stroke="#111" stroke-width="1.1"/>
<polyline points="736.4,508.3 757.8,496.6" fill="none" stroke="#111" stroke-width="1.1"/>
<polygon points="742.6,542.6 757.6,533.5 783.5,548.3 768.9,558" fill="#6d6c66"/>
<polygon points="742.6,542.6 768.9,558 767.2,668 742.6,652.8" fill="#646560"/>
<polygon points="768.9,558 783.5,548.3 782.8,661.6 767.2,668" fill="#575651"/>
<path d="M768.4,563 L767.4,667.5" stroke="#868681" stroke-width="2.6" fill="none"/>
<path d="M743.4,544.3 L765.6,557.4 Q768.3,559.2 768.4,563" stroke="#a9a9a4" stroke-width="2.4" fill="none" stroke-linecap="round"/>
<polyline points="757.7,534 757.6,661.5" fill="none" stroke="#222" stroke-width="0.9" opacity="0.75"/>
<polyline points="770.2,561 769.2,667" fill="none" stroke="#1c1c1c" stroke-width="0.9" opacity="0.85"/>
<polyline points="765.6,560 765,666.5" fill="none" stroke="#2a2a2a" stroke-width="0.7" opacity="0.6"/>
<polyline points="742.6,652.8 742.6,542.6 757.6,533.5" fill="none" stroke="#111" stroke-width="1.1" stroke-linejoin="round"/>
<polyline points="757.6,533.5 783.5,548.3 782.8,661.6 767.2,668 742.6,652.8" fill="none" stroke="#0e0e0e" stroke-width="1.4" stroke-linejoin="round"/>
<polyline points="783.5,548.3 769.6,557.6" fill="none" stroke="#1a1a1a" stroke-width="0.9"/>
<polyline points="231.9,269.1 766.0,595.2" fill="none" stroke="#2a2a2a" stroke-width="0.8" stroke-dasharray="10 5" opacity="0.7"/>
<clipPath id="cb0"><path d="M322.43 324.36 L322.77 327.33 L322.98 330.19 L323.04 332.94 L322.97 335.56 L322.76 338.04 L322.41 340.38 L321.92 342.56 L321.31 344.57 L320.57 346.41 L319.70 348.07 L318.71 349.53 L317.60 350.81 L316.39 351.88 L315.07 352.76 L313.65 353.42 L312.13 353.88 L310.53 354.14 L308.85 354.18 L307.10 354.01 L305.29 353.64 L303.42 353.07 L301.50 352.29 L299.54 351.31 L297.55 350.15 L295.54 348.79 L293.51 347.25 L291.47 345.54 L289.43 343.66 L287.40 341.63 L285.39 339.44 L283.41 337.11 L281.46 334.64 L279.55 332.06 L277.69 329.36 L275.89 326.56 L274.15 323.68 L272.48 320.71 L270.89 317.68 L269.38 314.60 L267.96 311.48 L266.64 308.32 L265.42 305.16 L264.30 301.98 L263.30 298.82 L262.41 295.68 L261.65 292.58 L261.00 289.52 L260.48 286.53 L260.09 283.61 L259.83 280.77 L259.70 278.03 L259.70 275.40 L259.83 272.89 L260.10 270.51 L260.50 268.28 L261.03 266.19 L261.69 264.27 L262.48 262.51 L263.39 260.94 L264.42 259.54 L265.57 258.34 L266.83 257.34 L268.20 256.54 L269.67 255.95 L271.23 255.57 L272.89 255.40 L274.62 255.45 L276.43 255.71 L278.31 256.19 L280.25 256.88 L282.24 257.78 L284.27 258.89 L286.34 260.20 L288.43 261.71 L290.53 263.41 L292.64 265.30 L294.75 267.36 L296.84 269.59 L298.91 271.98 L300.94 274.52 L302.93 277.19 L304.88 279.98 L306.76 282.89 L308.57 285.89 L310.31 288.98 L311.96 292.14 L313.52 295.36 L314.98 298.61 L316.34 301.89 L317.58 305.19 L318.71 308.48 L319.71 311.75 L320.59 314.99 L321.34 318.18 L321.95 321.31 L322.43 324.36 Z"/></clipPath>
<g clip-path="url(#cl0)"><polyline points="231.9,269.1 766.0,595.2" fill="none" stroke="#161616" stroke-width="1.1" stroke-dasharray="10 5" clip-path="url(#cb0)"/></g>
<circle cx="291.1" cy="305.8" r="3.8" fill="#0c0c0c"/>
<clipPath id="cb1"><path d="M438.88 395.48 L439.12 398.53 L439.20 401.46 L439.14 404.28 L438.92 406.95 L438.55 409.48 L438.04 411.85 L437.38 414.05 L436.57 416.07 L435.63 417.91 L434.56 419.56 L433.36 421.00 L432.03 422.24 L430.59 423.27 L429.04 424.09 L427.39 424.70 L425.64 425.09 L423.81 425.26 L421.89 425.21 L419.91 424.94 L417.86 424.47 L415.76 423.78 L413.62 422.88 L411.43 421.78 L409.23 420.48 L407.00 418.99 L404.77 417.31 L402.53 415.45 L400.31 413.42 L398.11 411.23 L395.93 408.89 L393.79 406.41 L391.69 403.79 L389.65 401.05 L387.67 398.20 L385.75 395.25 L383.92 392.21 L382.17 389.09 L380.51 385.91 L378.95 382.69 L377.49 379.42 L376.14 376.13 L374.91 372.83 L373.80 369.53 L372.82 366.25 L371.96 363.00 L371.24 359.79 L370.66 356.63 L370.21 353.54 L369.91 350.54 L369.75 347.62 L369.74 344.82 L369.87 342.13 L370.14 339.57 L370.57 337.15 L371.13 334.88 L371.84 332.78 L372.68 330.84 L373.66 329.09 L374.78 327.52 L376.02 326.15 L377.38 324.98 L378.87 324.02 L380.46 323.27 L382.16 322.74 L383.97 322.43 L385.86 322.34 L387.83 322.47 L389.88 322.83 L392.00 323.42 L394.18 324.22 L396.40 325.25 L398.66 326.48 L400.94 327.93 L403.25 329.59 L405.56 331.44 L407.87 333.48 L410.17 335.70 L412.44 338.09 L414.68 340.64 L416.87 343.34 L419.01 346.18 L421.09 349.14 L423.09 352.22 L425.01 355.39 L426.83 358.64 L428.56 361.96 L430.18 365.33 L431.68 368.74 L433.06 372.17 L434.31 375.60 L435.43 379.03 L436.41 382.43 L437.25 385.79 L437.94 389.09 L438.48 392.33 L438.88 395.48 Z"/></clipPath>
<g clip-path="url(#cl1)"><polyline points="231.9,269.1 766.0,595.2" fill="none" stroke="#161616" stroke-width="1.1" stroke-dasharray="10 5" clip-path="url(#cb1)"/></g>
<circle cx="404.0" cy="374.0" r="3.4" fill="#0c0c0c"/>
<clipPath id="cb2"><path d="M567.82 474.22 L567.93 477.36 L567.88 480.37 L567.65 483.25 L567.26 485.97 L566.70 488.54 L565.98 490.93 L565.11 493.15 L564.08 495.17 L562.90 496.99 L561.58 498.61 L560.12 500.02 L558.54 501.22 L556.83 502.19 L555.01 502.94 L553.08 503.46 L551.06 503.76 L548.95 503.83 L546.76 503.67 L544.50 503.29 L542.18 502.68 L539.81 501.85 L537.40 500.82 L534.95 499.57 L532.49 498.11 L530.02 496.46 L527.56 494.62 L525.10 492.60 L522.66 490.40 L520.25 488.04 L517.88 485.52 L515.56 482.86 L513.30 480.07 L511.10 477.15 L508.98 474.13 L506.95 471.01 L505.01 467.80 L503.17 464.52 L501.43 461.18 L499.81 457.79 L498.32 454.38 L496.95 450.94 L495.71 447.50 L494.61 444.06 L493.65 440.65 L492.85 437.28 L492.19 433.96 L491.68 430.70 L491.33 427.51 L491.14 424.42 L491.11 421.43 L491.24 418.56 L491.53 415.81 L491.98 413.21 L492.59 410.76 L493.35 408.47 L494.26 406.35 L495.33 404.41 L496.54 402.67 L497.90 401.12 L499.39 399.78 L501.02 398.66 L502.77 397.75 L504.63 397.07 L506.61 396.62 L508.69 396.39 L510.86 396.40 L513.12 396.65 L515.45 397.13 L517.85 397.84 L520.30 398.78 L522.79 399.95 L525.32 401.34 L527.86 402.94 L530.42 404.76 L532.98 406.78 L535.52 409.00 L538.04 411.40 L540.52 413.97 L542.95 416.71 L545.33 419.60 L547.63 422.63 L549.86 425.78 L551.99 429.03 L554.03 432.39 L555.95 435.82 L557.76 439.32 L559.43 442.86 L560.98 446.44 L562.38 450.03 L563.64 453.62 L564.74 457.19 L565.68 460.73 L566.47 464.22 L567.09 467.64 L567.54 470.98 L567.82 474.22 Z"/></clipPath>
<g clip-path="url(#cl2)"><polyline points="231.9,269.1 766.0,595.2" fill="none" stroke="#161616" stroke-width="1.1" stroke-dasharray="10 5" clip-path="url(#cb2)"/></g>
<circle cx="529.0" cy="451.0" r="3.4" fill="#0c0c0c"/>
<clipPath id="cb3"><path d="M712.59 562.64 L712.54 565.86 L712.31 568.94 L711.88 571.88 L711.27 574.65 L710.48 577.24 L709.51 579.65 L708.37 581.86 L707.07 583.87 L705.60 585.67 L703.98 587.25 L702.22 588.60 L700.32 589.73 L698.29 590.62 L696.14 591.27 L693.88 591.69 L691.53 591.87 L689.08 591.81 L686.56 591.52 L683.97 590.99 L681.32 590.23 L678.63 589.24 L675.91 588.03 L673.16 586.60 L670.40 584.97 L667.64 583.13 L664.90 581.09 L662.17 578.88 L659.48 576.48 L656.83 573.92 L654.24 571.21 L651.71 568.35 L649.26 565.35 L646.89 562.24 L644.61 559.02 L642.44 555.71 L640.38 552.31 L638.44 548.84 L636.62 545.32 L634.95 541.76 L633.41 538.18 L632.02 534.58 L630.78 530.99 L629.70 527.41 L628.79 523.86 L628.04 520.36 L627.47 516.92 L627.07 513.55 L626.84 510.27 L626.79 507.09 L626.92 504.03 L627.22 501.09 L627.71 498.29 L628.37 495.65 L629.20 493.17 L630.21 490.87 L631.38 488.75 L632.72 486.82 L634.21 485.10 L635.86 483.59 L637.66 482.30 L639.60 481.24 L641.67 480.41 L643.86 479.82 L646.17 479.46 L648.58 479.35 L651.09 479.49 L653.68 479.87 L656.35 480.49 L659.08 481.36 L661.86 482.46 L664.68 483.80 L667.52 485.37 L670.38 487.17 L673.23 489.18 L676.08 491.41 L678.89 493.83 L681.67 496.44 L684.40 499.22 L687.06 502.17 L689.65 505.28 L692.15 508.52 L694.54 511.88 L696.83 515.35 L699.00 518.91 L701.03 522.55 L702.92 526.24 L704.66 529.98 L706.25 533.74 L707.67 537.50 L708.92 541.26 L709.99 544.99 L710.89 548.67 L711.60 552.30 L712.12 555.84 L712.45 559.30 L712.59 562.64 Z"/></clipPath>
<g clip-path="url(#cl3)"><polyline points="231.9,269.1 766.0,595.2" fill="none" stroke="#161616" stroke-width="1.1" stroke-dasharray="10 5" clip-path="url(#cb3)"/></g>
<circle cx="669.0" cy="536.5" r="3.4" fill="#0c0c0c"/>
<circle cx="244.6" cy="347.4" r="4.3" fill="#5a48b0"/><circle cx="244.6" cy="347.4" r="3.6" fill="#9a8ce0"/><circle cx="244.6" cy="347.4" r="2.4" fill="#c4bcf0"/><circle cx="244.6" cy="347.4" r="1.6" fill="#1c1450"/>
<g id="icons" stroke-linejoin="round">
<!-- DESIGN dropdown arrow -->
<polygon points="76,32.8 82,32.8 79,36.4" fill="#333"/>
<!-- group arrows -->
<polygon points="268.6,63 274.6,63 271.6,66.6" fill="#333"/>
<polygon points="459.4,63 465.4,63 462.4,66.6" fill="#333"/>
<polygon points="629.4,63 635.4,63 632.4,66.6" fill="#333"/>
<polygon points="822,63 828,63 825,66.6" fill="#333"/>

<!-- 1 create sketch -->
<g fill="none" stroke="#4a4a4a" stroke-width="1">
<path d="M132,22.4 H154.5 M156.4,24.5 V38.5 M129.6,24.5 V47.5 M132,49.6 H145"/>
<path d="M138.6,29.6 H141 M143,29.6 H147.4 M136.8,31.6 V40.6"/>
<path d="M149.4,31.4 Q149,42 138.6,42.6"/>
</g>
<g fill="#555"><rect x="128" y="20.8" width="3.2" height="3.2"/><rect x="154.8" y="20.8" width="3.2" height="3.2"/><rect x="128" y="48" width="3.2" height="3.2"/>
<rect x="135.4" y="28.2" width="2.8" height="2.8"/><rect x="148" y="28.2" width="2.8" height="2.8"/><rect x="135.4" y="41.2" width="2.8" height="2.8"/></g>
<path d="M151.3,39.4 h3.8 v5 h5 v3.8 h-5 v5 h-3.8 v-5 h-5 v-3.8 h5 z" fill="#2da14a"/>

<!-- 2 extrude -->
<polygon points="172.2,47 190.9,47 195.8,43 195.8,47.8 190.9,52.6 172.2,52.6" fill="#b4b4b4"/>
<polygon points="190.9,47 195.8,43 195.8,47.8 190.9,52.6" fill="#9c9c9c"/>
<polygon points="172.2,27 190.9,27 190.9,47.4 172.2,47.4" fill="#5fa9e4"/>
<polygon points="172.2,27 177.1,21.4 195.8,21.4 190.9,27" fill="#86c4f4"/>
<polygon points="190.9,27 195.8,21.4 195.8,43.4 190.9,47.4" fill="#4a8fcf"/>
<path d="M199.4,47 V25" stroke="#1a1a1a" stroke-width="1.2" fill="none"/>
<polygon points="196.7,27.8 199.4,21.6 202.1,27.8" fill="#1a1a1a"/>

<!-- 3 revolve -->
<path d="M214.5,34.4 Q229.4,21.6 245.7,34.4 L240.3,39.8 Q229.4,32 220.4,39.3 Z" fill="#82c2f3"/>
<path d="M214.5,34.4 L220.4,39.3 L220.4,49.8 L214.5,43.8 Z" fill="#4f9bdc"/>
<path d="M220.4,39.3 Q229.4,32 240.3,39.8 L240.3,48.8 Q229.4,40.4 220.4,49.8 Z" fill="#5ba7e3"/>
<path d="M240.3,39.8 L245.7,34.6 L245.7,44.6 L240.3,48.8 Z" fill="#fff" stroke="#444" stroke-width="1"/>
<path d="M243.7,28.2 Q231,17.4 217.5,26.6" fill="none" stroke="#222" stroke-width="1.1"/>
<polygon points="214.3,28.6 218.4,24 219.6,28.8" fill="#1a1a1a"/>

<!-- 4 hole -->
<polygon points="257.4,28.9 263.1,21.5 288.6,21.5 283.2,28.9" fill="#ebebeb"/>
<polygon points="283.2,28.9 288.6,21.5 288.6,45.8 283.2,52.5" fill="#bdbdbd"/>
<rect x="257.4" y="28.9" width="25.8" height="23.6" fill="#d9d9d9"/>
<path d="M257.4,52.5 V28.9 L263.1,21.5 H288.6 V45.8 L283.2,52.5 Z" fill="none" stroke="#555" stroke-width="1"/>
<circle cx="270.8" cy="39" r="8.2" fill="#fff" stroke="#555" stroke-width="0.9"/>
<circle cx="270.8" cy="39" r="6.4" fill="#5ba5e0"/>
<path d="M270.4,32.6 A6.4,6.4 0 0 1 277,41 Q270.6,41.4 270.4,32.6 Z" fill="#fff"/>

<!-- 5 pattern -->
<path d="M307,26.6 H321.5 M303.7,29.8 V44.3 M307,47.4 H321.5" fill="none" stroke="#444" stroke-width="1"/>
<rect x="300.6" y="23.5" width="6.2" height="6.2" fill="#fff" stroke="#444" stroke-width="1"/>
<rect x="321.3" y="23.3" width="6.8" height="6.8" fill="#55a3df"/>
<rect x="300.2" y="44.1" width="6.8" height="6.8" fill="#55a3df"/>
<rect x="321.3" y="44.1" width="6.8" height="6.8" fill="#55a3df"/>

<!-- 6 form -->
<path d="M343,35 Q343,31.5 345.5,28.8 L349,25 Q350.6,23.4 353,23.4 H359.8 L372.7,35.9 V43 Q372.7,46 370.5,47.8 L367,51 Q365.6,52.2 363.5,52.2 H348 Q343,52.2 343,47.4 Z" fill="#c3b3f2" stroke="#6c52c2" stroke-width="1.1"/>
<path d="M366.6,38 L372.2,35.6 V43.5 Q372,45.8 366.6,49.6 Z" fill="#7d60d0"/>
<path d="M346,27.6 L349.6,24.4 H359.4 L363,28.4 Q358,30.6 346,30.6 Z" fill="#b09aec"/><rect x="345.8" y="32.4" width="18.6" height="18" rx="3.4" fill="#9b7ee4"/>
<path d="M354.6,32.6 V50.2 M346,41.4 H364.2" stroke="#7858cc" stroke-width="0.9" fill="none"/>
<polygon id="star" points="366.8,21.4 368.3,25.7 372.5,23.7 370.5,27.9 374.8,29.4 370.5,30.9 372.5,35.1 368.3,33.1 366.8,37.4 365.3,33.1 361.1,35.1 363.1,30.9 358.8,29.4 363.1,27.9 361.1,23.7 365.3,25.7" fill="#f6a414" stroke="#f0f0f0" stroke-width="0.8"/>

<!-- 7 automate -->
<path d="M422.4,25.6 Q425.4,31.6 430.6,32.4 Q437.4,32.6 441.4,28.8 L442.6,31.4 Q439,35 434.6,35.6 L434.2,43 L428.4,43 L427.6,35 Q423.6,33.6 420.6,27.4 Z" fill="#4a98d6"/>
<polygon points="429.4,34.2 434,34.2 431.6,40.6" fill="#a9d2f0"/>
<circle cx="431.3" cy="47.6" r="5.1" fill="#4a98d6"/>
<circle cx="431.3" cy="47.6" r="3" fill="#f0f0f0" stroke="#555" stroke-width="0.9"/>
<circle cx="431.3" cy="47.6" r="1" fill="#e09060"/>
<rect x="417.3" y="21.6" width="6.4" height="6.2" fill="#fff" stroke="#333" stroke-width="1.1"/>
<rect x="441" y="24.7" width="6.4" height="6.4" fill="#eef2ee" stroke="#333" stroke-width="1.1" transform="rotate(-32 444.2 27.9)"/>

<!-- 8 press pull -->
<path d="M492.5,52.5 V26.9 L497.9,21.5 H503 V52.5 Z" fill="#dcdcdc"/>
<path d="M498.4,52.5 H492.5 V26.9 L497.9,21.5 H503" fill="none" stroke="#555" stroke-width="1"/>
<polygon points="499.4,26.9 504.4,21.5 513.3,21.5 513.3,46.8 508.3,52.5 499.4,52.5" fill="#5ba5e0" stroke="#d6ecfb" stroke-width="1"/>
<polygon points="499.4,26.9 504.4,21.5 513.3,21.5 508.3,26.9" fill="#84c4f5"/>
<polygon points="508.3,26.9 513.3,21.5 513.3,46.8 508.3,52.5" fill="#4288c9"/>
<path d="M511.3,36.6 H518" stroke="#fff" stroke-width="2.6" fill="none"/>
<path d="M512,36.6 H518" stroke="#222" stroke-width="1.2" fill="none"/>
<polygon points="517.2,33.8 520.9,36.6 517.2,39.2" fill="#222"/>

<!-- 9 fillet -->
<polygon points="534.4,28.4 541.1,21.5 550.5,21.5 545.6,28.4" fill="#ececec"/>
<path d="M558,40.5 L565.6,35 V45.3 L558,52.5 Z" fill="#b9b9b9"/>
<path d="M534.4,52.5 V28.4 H545.6 Q556,29.5 558,40.8 V52.5 Z" fill="#d9d9d9"/>
<path d="M545.6,26.6 L550.5,21.5 Q563,23 565.9,34.9 L559.5,40.8 Q557,29.5 545.6,26.6 Z" fill="#5ba5e0"/>
<path d="M550.5,21.5 H541.1 L534.4,28.4 V52.5 H558 L565.6,45.3 V35.5" fill="none" stroke="#555" stroke-width="1"/>

<!-- 10 shell -->
<polygon points="577.4,28.9 584.9,21.5 608.5,21.5 601.8,28.9" fill="#f2f2f2"/>
<polygon points="601.8,28.9 608.5,21.5 608.5,44.8 601.8,52.2" fill="#bfbfbf"/>
<rect x="577.4" y="28.9" width="24.4" height="23.3" fill="#dedede"/>
<rect x="580" y="31.9" width="18.3" height="17.9" fill="#fff"/>
<polygon points="581.1,33.1 588.7,33.1 588.7,41.3 581.1,48.3" fill="#3f8fd2"/>
<polygon points="581.1,48.3 588.7,41.3 596.8,41.3 596.8,48.3" fill="#82c4f6"/>
<path d="M601.8,52.2 H577.4 V28.9 L584.9,21.5 H608.5 V44.8 Z" fill="none" stroke="#555" stroke-width="1"/>

<!-- 11 combine -->
<polygon points="631.1,25.4 634.5,21.5 651.9,21.5 648.5,25.4" fill="#82c2f3"/>
<polygon points="648.5,25.4 651.9,21.5 651.9,38.3 648.5,42.3" fill="#4a90d0"/>
<rect x="631.1" y="25.4" width="17.4" height="16.9" fill="#5ba5e0"/>
<polygon points="620.3,35.4 624,31.4 631.1,31.4 631.1,35.4" fill="#82c2f3"/>
<polygon points="638,42.3 641.5,42.3 641.5,48.6 638,52.5" fill="#4a90d0"/>
<rect x="620.3" y="35.4" width="17.7" height="17.1" fill="#5ba5e0"/>

<!-- 12 split -->
<polygon points="665.2,41.8 687.3,41.8 692.7,36.4 692.7,45.8 687.3,51.3 665.2,51.3" fill="#dcdcdc"/>
<polygon points="687.3,41.8 692.7,36.4 692.7,45.8 687.3,51.3" fill="#c2c2c2"/>
<path d="M665.2,41.8 V51.3 H687.3 L692.7,45.8" fill="none" stroke="#555" stroke-width="1"/>
<polygon points="665.2,26.9 670.4,21.5 692.7,21.5 687.3,26.9" fill="#84c4f5"/>
<polygon points="687.3,26.9 692.7,21.5 692.7,30.9 687.3,36.8" fill="#4a90d0"/>
<rect x="665.2" y="26.9" width="22.1" height="9.9" fill="#5ba5e0"/>
<path d="M663.4,38.2 H687.8 L694.5,30.6" fill="none" stroke="#fff" stroke-width="1.4"/>
<path d="M663.4,39.6 H688.3 L694.7,32.2" fill="none" stroke="#8fd0f8" stroke-width="1.6"/>

<!-- 13 move -->
<path d="M721.8,24 V50 M709,36.9 H735" stroke="#333" stroke-width="2.2" fill="none"/>
<polygon points="721.8,21.2 727,28.8 716.6,28.8" fill="#333"/>
<polygon points="721.8,52.6 727,45 716.6,45" fill="#333"/>
<polygon points="706.2,36.9 713.9,31.7 713.9,42.1" fill="#333"/>
<polygon points="737.5,36.9 729.8,31.7 729.8,42.1" fill="#333"/>

<!-- 14 new component -->
<rect x="760.1" y="40.8" width="12.3" height="11.7" fill="#dadada"/>
<rect x="772.4" y="40.8" width="11.4" height="11.7" fill="#d5d5d5"/>
<polygon points="772.4,40.8 775.8,37.4 787.6,37.4 783.8,40.8" fill="#efefef"/>
<polygon points="783.8,40.8 787.6,37.4 787.6,48.8 783.8,52.5" fill="#b8b8b8"/>
<path d="M760.1,40.8 V52.5 H783.8 L787.6,48.8 V37.4 H776 M772.4,40.8 V52.5 M783.8,40.8 V52.5 M772.4,40.8 H783.8 L787.6,37.4" fill="none" stroke="#555" stroke-width="1"/>
<polygon points="760.1,29.4 763.4,25.4 775.8,25.4 772.4,29.4" fill="#84c4f5"/>
<polygon points="772.4,29.4 775.8,25.4 775.8,37.4 772.4,40.8" fill="#4a8fd0"/>
<rect x="760.1" y="29.4" width="12.3" height="11.6" fill="#5ba5e0"/>
<polygon points="783.6,20.9 785.1,25.2 789.3,23.2 787.3,27.4 791.6,28.9 787.3,30.4 789.3,34.6 785.1,32.6 783.6,36.9 782.1,32.6 777.9,34.6 779.9,30.4 775.6,28.9 779.9,27.4 777.9,23.2 782.1,25.2" fill="#f6a414" stroke="#f0f0f0" stroke-width="0.8"/>

<!-- 15 joint -->
<path d="M805.3,31 L811.2,24.6 Q812,23.4 814.5,23.4 H816.5 Q817.8,23.4 817.8,25 V33.6 Q817.8,34.4 816.8,34.4 H813.6 Q812,34.6 811.8,36.5 V43 L806.5,49.2 Q805.3,50 805.3,48.4 Z" fill="#d2d2d2" stroke="#666" stroke-width="1"/>
<path d="M811.8,25 V36" stroke="#bbb" stroke-width="1" fill="none"/>
<path d="M826,25.6 L832.4,31.9 V50.3 L826,43.8 Z" fill="#dcdcdc" stroke="#666" stroke-width="1"/>
<path d="M820.5,34.5 Q820.5,33.4 821.6,33.4 H826 V43.6 H821.6 Q820.5,43.6 820.5,42.6 Z" fill="#cfcfcf" stroke="#666" stroke-width="1"/>
<path d="M814.4,35.9 V40.4" stroke="#3a9be0" stroke-width="1" fill="none"/>
<path d="M823.3,28.9 V33 M821.8,31.2 L823.3,33.4 L824.8,31.2" stroke="#3a7fc0" stroke-width="0.9" fill="none"/>

<!-- browser header icons -->
<polygon points="0.4,96 5,92.8 5,99.2" fill="#333"/><polygon points="5.4,96 10,92.8 10,99.2" fill="#333"/>
<circle cx="278.4" cy="95.3" r="4.6" fill="#2e2e2e"/><rect x="275.6" y="94.5" width="5.6" height="1.6" fill="#fff"/>

<!-- tree: root expander -->
<defs><linearGradient id="gExp" x1="0" y1="0" x2="1" y2="1"><stop offset="0.3" stop-color="#d0d0d0"/><stop offset="1" stop-color="#4a4a4a"/></linearGradient></defs>
<polygon points="22.6,117.8 22.6,128 12.4,128" fill="url(#gExp)" stroke="#1c1c1c" stroke-width="1"/>
<!-- eyes -->
<g id="eye1"><path d="M34,123 Q41.9,113.6 49.8,123 Q41.9,132.4 34,123 Z" fill="#a4a4a4"/><circle cx="41.9" cy="123" r="3.3" fill="#efefef"/><circle cx="41.9" cy="123" r="1.7" fill="#a4a4a4"/></g>
<g><path d="M52.2,219 Q60,209.8 67.8,219 Q60,228.2 52.2,219 Z" fill="#a4a4a4"/><circle cx="60" cy="219" r="3.3" fill="#efefef"/><circle cx="60" cy="219" r="1.7" fill="#a4a4a4"/></g>
<g><path d="M52.2,243 Q60,233.8 67.8,243 Q60,252.2 52.2,243 Z" fill="#a4a4a4"/><circle cx="60" cy="243" r="3.3" fill="#efefef"/><circle cx="60" cy="243" r="1.7" fill="#a4a4a4"/></g>
<!-- eye slashed -->
<g fill="none" stroke="#adadad" stroke-width="1"><path d="M52.6,195 Q60,187 67.4,195 Q60,203 52.6,195 Z"/><circle cx="60" cy="195" r="2.6"/><path d="M54.8,190 L65.8,200.4"/></g>
<!-- component cube -->
<path d="M59.4,121 Q59.4,119.9 60.2,119.1 L62.6,116.2 Q63.2,115.5 64.4,115.5 H73.6 Q74.8,115.5 74.8,116.6 V125 Q74.8,125.9 74.2,126.6 L71.4,129.7 Q70.8,130.4 69.8,130.4 H60.6 Q59.4,130.4 59.4,129.2 Z" fill="#f4f4f4" stroke="#1a1a1a" stroke-width="1.1"/>
<rect x="60.2" y="120.4" width="10" height="9.4" fill="#dfe3e6"/>
<path d="M70.6,120 L74.4,116 M70.6,120 H59.8 M70.6,120 V130" stroke="#f8f8f8" stroke-width="0.9" fill="none"/>
<!-- radio -->
<circle cx="232.4" cy="123.3" r="5.7" fill="#fff" stroke="#333" stroke-width="1.1"/><circle cx="232.4" cy="123.3" r="2.4" fill="#333"/>
<!-- expanders -->
<g fill="#f4f4f4" stroke="#1c1c1c" stroke-width="1.4" stroke-linejoin="round">
<path d="M32,141.4 L39.6,147.3 L32,153.2 Z"/>
<path d="M32,165.4 L39.6,171.3 L32,177.2 Z"/>
<path d="M32,189.4 L39.6,195.3 L32,201.2 Z"/>
<path d="M32,213.4 L39.6,219.3 L32,225.2 Z"/>
<path d="M32,237.4 L39.6,243.3 L32,249.2 Z"/>
</g>
<!-- gear -->
<g transform="translate(58.6 146.6)" fill="#8a8a8a">
<g id="teeth"><rect x="-1.5" y="-6.6" width="3" height="13.2"/><rect x="-1.5" y="-6.6" width="3" height="13.2" transform="rotate(45)"/><rect x="-1.5" y="-6.6" width="3" height="13.2" transform="rotate(90)"/><rect x="-1.5" y="-6.6" width="3" height="13.2" transform="rotate(135)"/></g>
<circle r="4.9"/><circle r="2.3" fill="#efefef"/></g>
<!-- folders -->
<g fill="#9b9b9b">
<path d="M52.2,165 H59 L60,166.6 H67.8 V176.6 H52.2 Z"/>
<path d="M77,189 H83.8 L84.8,190.6 H92.8 V200.6 H77 Z"/>
<path d="M77,213 H83.8 L84.8,214.6 H92.8 V224.6 H77 Z"/>
<path d="M77,237 H83.8 L84.8,238.6 H92.8 V248.6 H77 Z"/>
</g>
<g stroke="#efefef" stroke-width="0.7"><path d="M52.2,167.4 H59.6"/><path d="M77,191.4 H84.4"/><path d="M77,215.4 H84.4"/><path d="M77,239.4 H84.4"/></g>
</g>

</svg>
<span class="t" style="left:141.8px;top:-1.46px;font-size:11px;font-weight:400;color:#1b8bd0;transform:scaleX(0.9541)">SOLID</span>
<span class="t" style="left:219.3px;top:-1.46px;font-size:11px;font-weight:400;color:#3a3a3a;transform:scaleX(0.8832)">SURFACE</span>
<span class="t" style="left:312.4px;top:-1.46px;font-size:11px;font-weight:400;color:#3a3a3a;transform:scaleX(0.8433)">MESH</span>
<span class="t" style="left:385.6px;top:-1.46px;font-size:11px;font-weight:400;color:#3a3a3a;transform:scaleX(0.8794)">SHEET METAL</span>
<span class="t" style="left:498.6px;top:-1.46px;font-size:11px;font-weight:400;color:#3a3a3a;transform:scaleX(0.8940)">PLASTIC</span>
<span class="t" style="left:586.7px;top:-1.46px;font-size:11px;font-weight:400;color:#3a3a3a;transform:scaleX(0.8316)">UTILITIES</span>
<span class="t" style="left:33.3px;top:27.55px;font-size:11px;font-weight:700;color:#3a3a3a;transform:scaleX(0.8936)">DESIGN</span>
<span class="t" style="left:226.6px;top:58.55px;font-size:11px;font-weight:400;color:#3a3a3a;transform:scaleX(0.8765)">CREATE</span>
<span class="t" style="left:400.5px;top:58.55px;font-size:11px;font-weight:400;color:#3a3a3a;transform:scaleX(0.9133)">AUTOMATE</span>
<span class="t" style="left:589.0px;top:58.55px;font-size:11px;font-weight:400;color:#3a3a3a;transform:scaleX(0.8532)">MODIFY</span>
<span class="t" style="left:764.5px;top:58.55px;font-size:11px;font-weight:400;color:#3a3a3a;transform:scaleX(0.9071)">ASSEMBLE</span>
<span class="t" style="left:20.6px;top:88.55px;font-size:11px;font-weight:400;color:#555;transform:scaleX(0.9042)">BROWSER</span>
<span class="t" style="left:89.7px;top:116.55px;font-size:11px;font-weight:700;color:#ffffff;transform:scaleX(1.0000)">Shockstand_v2_B10 v6</span>
<span class="t" style="left:78.0px;top:140.54px;font-size:11px;font-weight:400;color:#2a2a2a;transform:scaleX(0.9652)">Document Settings</span>
<span class="t" style="left:82.6px;top:164.54px;font-size:11px;font-weight:400;color:#2a2a2a;transform:scaleX(0.9856)">Named Views</span>
<span class="t" style="left:107.5px;top:188.54px;font-size:11px;font-weight:400;color:#2a2a2a;transform:scaleX(0.9167)">Origin</span>
<span class="t" style="left:107.5px;top:212.54px;font-size:11px;font-weight:400;color:#2a2a2a;transform:scaleX(0.9631)">Bodies</span>
<span class="t" style="left:107.5px;top:236.54px;font-size:11px;font-weight:400;color:#2a2a2a;transform:scaleX(0.9790)">Sketches</span>

</body></html>
